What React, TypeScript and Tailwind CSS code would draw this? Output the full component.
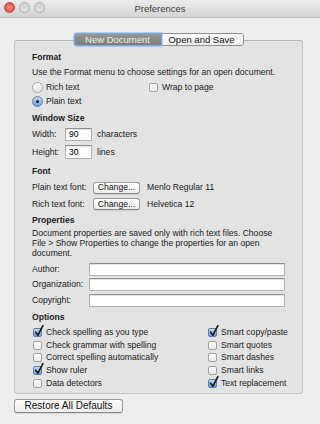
import React from 'react';

const Checkbox = ({ checked = false }: { checked?: boolean }) => (
    <span
        className={`relative inline-block shrink-0 w-[9px] h-[9px] rounded-[2px] border ${checked
            ? 'border-[#5b7fab] bg-linear-to-b from-[#c3dbf5] to-[#6b9fdb]'
            : 'border-[#a2a2a2] bg-linear-to-b from-white to-[#e9e9e9]'}`}
    >
        {checked && (
            <svg className="absolute left-[0px] top-[-4px]" width="10" height="12" viewBox="0 0 10 12">
                <path d="M1.6 7.2 L3.9 10.2 L8.8 0.8" stroke="#1c1c1c" strokeWidth="1.7" fill="none" strokeLinecap="round" strokeLinejoin="round" />
            </svg>
        )}
    </span>
);

const Radio = ({ checked = false }: { checked?: boolean }) => (
    <span
        className={`inline-flex shrink-0 items-center justify-center w-[11px] h-[11px] rounded-full border ${checked
            ? 'border-[#5b7fab] bg-linear-to-b from-[#c3dbf5] to-[#6b9fdb]'
            : 'border-[#a2a2a2] bg-linear-to-b from-white to-[#e6e6e6]'}`}
    >
        {checked && <span className="w-[3px] h-[3px] rounded-full bg-[#1c1c1c]" />}
    </span>
);

const Field = ({ value = '', className = '' }: { value?: string; className?: string }) => (
    <div className={`flex items-center bg-white border border-[#b1b1b1] border-t-[#8f8f8f] shadow-[inset_0_1px_1px_rgba(0,0,0,0.12)] pl-[3px] text-[8.6px] text-black ${className}`}>
        {value}
    </div>
);

const PushButton = ({ label, className = '' }: { label: string; className?: string }) => (
    <div className={`flex items-center justify-center whitespace-nowrap rounded-[3px] border border-[#9a9a9a] border-b-[#858585] bg-linear-to-b from-white to-[#ececec] shadow-[0_1px_0_rgba(0,0,0,0.08)] text-[#111] ${className}`}>
        {label}
    </div>
);

const leftOptions = [
    { label: 'Check spelling as you type', checked: true },
    { label: 'Check grammar with spelling', checked: false },
    { label: 'Correct spelling automatically', checked: false },
    { label: 'Show ruler', checked: true },
    { label: 'Data detectors', checked: false },
];

const rightOptions = [
    { label: 'Smart copy/paste', checked: true },
    { label: 'Smart quotes', checked: false },
    { label: 'Smart dashes', checked: false },
    { label: 'Smart links', checked: false },
    { label: 'Text replacement', checked: true },
];

export default function App() {
    return (
        <div className="w-[320px] h-[424px] overflow-hidden bg-[#ededed] font-['Liberation_Sans',Arial,sans-serif] text-[8.6px] text-[#1a1a1a] leading-none whitespace-nowrap">
            {/* Title bar */}
            <div className="relative h-[18px] flex items-center justify-center bg-linear-to-b from-[#ececec] to-[#d4d4d4] border-b border-[#bcbcbc]">
                <div className="absolute left-[4px] top-[2px] flex gap-[4px]">
                    <span className="w-[11px] h-[11px] rounded-full border border-[#b9433e] bg-radial from-[#f68a83] to-[#dd3b33]" />
                    <span className="w-[11px] h-[11px] rounded-full border border-[#aeaeae] bg-linear-to-b from-[#cfcfcf] to-[#e6e6e6]" />
                    <span className="w-[11px] h-[11px] rounded-full border border-[#aeaeae] bg-linear-to-b from-[#cfcfcf] to-[#e6e6e6]" />
                </div>
                <span className="text-[9.5px] text-[#3c3c3c]">Preferences</span>
            </div>

            {/* Tabs */}
            <div className="relative z-10 mt-[15px] ml-[14px] w-[289px] flex justify-center">
                <div className="flex h-[13px] rounded-[3px] border border-[#8d8d8d] bg-white text-[9.5px]">
                    <div className="relative z-10 w-[86px] flex items-center justify-center rounded-l-[2px] bg-linear-to-b from-[#979797] to-[#7c7c7c] text-[#ececec] shadow-[0_0_0_1.5px_#7eaadf]">
                        New Document
                    </div>
                    <div className="w-[82px] flex items-center justify-center rounded-r-[2px] bg-linear-to-b from-white to-[#f2f2f2] text-[#111]">
                        Open and Save
                    </div>
                </div>
            </div>

            {/* Group box */}
            <div className="-mt-[6px] ml-[14px] w-[289px] h-[354px] rounded-[3px] border border-[#c4c4c4] border-t-[#b5b5b5] bg-[#e3e3e3] pt-[10px] pl-[17px] pr-[10px]">
                <div className="h-[13px] flex items-center font-bold">Format</div>
                <div className="h-[16px] flex items-center">Use the Format menu to choose settings for an open document.</div>
                <div className="h-[14px] flex items-center">
                    <div className="w-[117px] flex items-center gap-[3px]">
                        <Radio />
                        <span>Rich text</span>
                    </div>
                    <div className="flex items-center gap-[4px]">
                        <Checkbox />
                        <span>Wrap to page</span>
                    </div>
                </div>
                <div className="h-[15px] flex items-center gap-[3px]">
                    <Radio checked />
                    <span>Plain text</span>
                </div>

                <div className="h-[18px] flex items-center font-bold">Window Size</div>
                <div className="h-[15px] flex items-center">
                    <span className="w-[33px]">Width:</span>
                    <Field value="90" className="w-[27px] h-[13px]" />
                    <span className="ml-[5px]">characters</span>
                </div>
                <div className="h-[20px] flex items-center">
                    <span className="w-[33px]">Height:</span>
                    <Field value="30" className="w-[27px] h-[14px]" />
                    <span className="ml-[5px]">lines</span>
                </div>

                <div className="h-[18px] flex items-center font-bold">Font</div>
                <div className="h-[15px] flex items-center">
                    <span className="w-[61px]">Plain text font:</span>
                    <PushButton label="Change..." className="w-[47px] h-[12px] text-[8.6px]" />
                    <span className="ml-[7px]">Menlo Regular 11</span>
                </div>
                <div className="h-[18px] flex items-center">
                    <span className="w-[61px]">Rich text font:</span>
                    <PushButton label="Change..." className="w-[47px] h-[12px] text-[8.6px]" />
                    <span className="ml-[7px]">Helvetica 12</span>
                </div>

                <div className="h-[15px] flex items-center font-bold">Properties</div>
                <div className="h-[32px] leading-[10px]">
                    Document properties are saved only with rich text files. Choose<br />
                    File &gt; Show Properties to change the properties for an open<br />
                    document.
                </div>
                <div className="h-[18px] flex items-center pr-[7px]">
                    <span className="w-[57px]">Author:</span>
                    <Field className="flex-1 h-[13px]" />
                </div>
                <div className="h-[13px] flex items-center pr-[7px]">
                    <span className="w-[57px]">Organization:</span>
                    <Field className="flex-1 h-[13px]" />
                </div>
                <div className="h-[18px] flex items-center pr-[7px]">
                    <span className="w-[57px]">Copyright:</span>
                    <Field className="flex-1 h-[13px]" />
                </div>

                <div className="h-[17px] flex items-center font-bold">Options</div>
                <div className="flex">
                    <div className="w-[176px]">
                        {leftOptions.map((o) => (
                            <div key={o.label} className="h-[12.7px] flex items-center gap-[4px] pl-[1px]">
                                <Checkbox checked={o.checked} />
                                <span>{o.label}</span>
                            </div>
                        ))}
                    </div>
                    <div>
                        {rightOptions.map((o) => (
                            <div key={o.label} className="h-[12.7px] flex items-center gap-[4px]">
                                <Checkbox checked={o.checked} />
                                <span>{o.label}</span>
                            </div>
                        ))}
                    </div>
                </div>
            </div>

            <PushButton label="Restore All Defaults" className="mt-[5px] ml-[14px] w-[109px] h-[14px] text-[10px]" />
        </div>
    );
}
